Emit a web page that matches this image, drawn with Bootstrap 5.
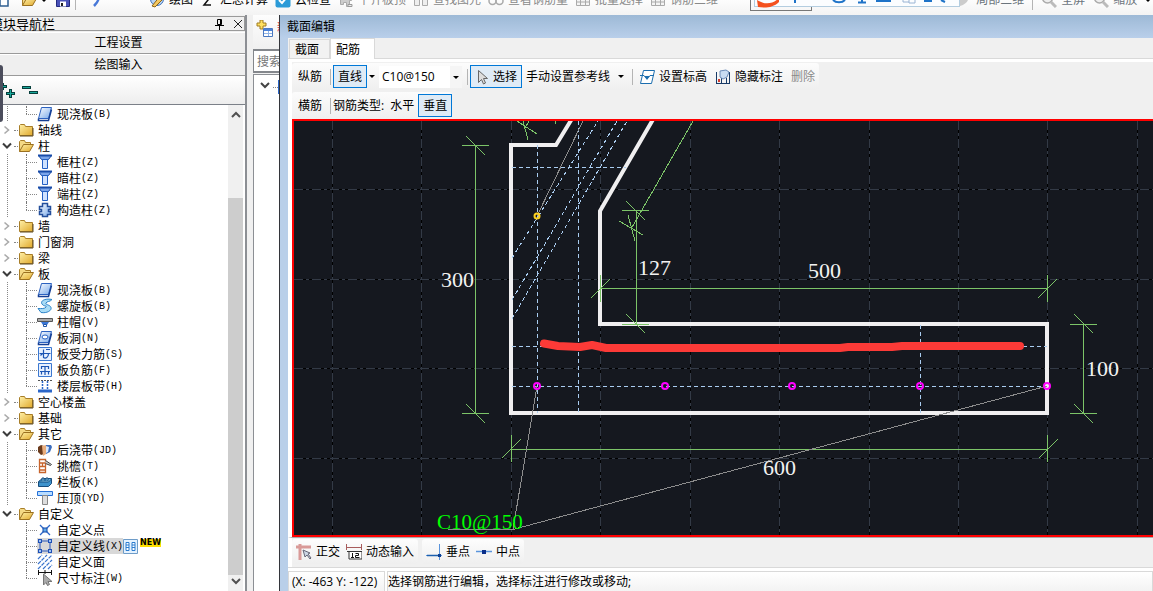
<!DOCTYPE html>
<html lang="zh-CN">
<head>
<meta charset="utf-8">
<meta name="viewport" content="width=device-width, initial-scale=1">
<title>截面编辑</title>
<link rel="stylesheet" href="https://cdn.jsdelivr.net/npm/bootstrap@5.3.0/dist/css/bootstrap.min.css">
<style>
:root{--ui:"Open Sans","Noto Sans CJK SC",sans-serif;--line:#8c8f94;--face:#f0f0f0}
body{font:12px/16px var(--ui);color:#000;background:var(--face)}
button,input,select{font:inherit;color:inherit;padding:0;border:0;background:none}
svg{flex:none;display:block}
.ic{width:16px;height:16px}
.topbar{height:15px;background:linear-gradient(#fdfdfd,#f3f3f3)}
.topbar button,.topbar .lead-icons,.topbar .view-tools{height:24px;display:flex;align-items:center;gap:4px;flex:none;white-space:nowrap}
.topbar .main-tools{margin-left:41px;gap:7px}
.topbar>*{flex:none;margin-bottom:3px}
.off{color:#8a8a8a}
.vsep{width:1px;height:16px;background:#b4b4b4;flex:none}
.ime-wrap{width:210px;height:12px;margin-left:32px;align-self:flex-start}
.ime-under{width:62px;height:11px;border:1px solid #777;border-top:0}
.ime{inset:0 0 auto 4px;height:7px;background:#fbfdff;border:1px solid #b3cde0;border-top:0}
/* navigation panel */
.navpanel{width:255px;margin-left:-8px;border-right:2px solid var(--line);flex:none}
.navpanel .cap{height:15px;margin-top:1px;border:1px solid #9a9a9a;border-left:0;font-size:13px}
.navpanel .cap span{margin-left:-2px}
.navpanel .bar{height:22px;border:0;border-top:1px solid #fff;border-bottom:1px solid #9a9a9a;background:#efefef;width:100%}
.navpanel .bar:first-of-type{margin-top:1px}
.navpanel .tools{height:28px;background:linear-gradient(#fff,#ededed);padding-left:8px}
.treebox{border-top:1px solid #7b8088;background:#fff;min-height:0;padding-left:8px}
.tree,.tree ul{list-style:none;margin:0;padding:0}
.tree{padding-top:1px;font-family:"Noto Sans CJK SC",sans-serif}
.row1,.kid{height:16px;display:flex;align-items:center;white-space:nowrap}
.row1 button{width:14px;height:16px;display:flex;align-items:center;justify-content:center;flex:none}
.row1 .stub{width:4px;border-top:1px dotted #888}
.row1 .ic{margin-right:4px}
.tree ul{background:repeating-linear-gradient(#888 0 1px,transparent 1px 2px) 7px 0/1px 100% no-repeat}
.tree .endgrp ul{background:none}
.kid{margin-left:26px;position:relative}
.kid::before{content:"";position:absolute;left:0;top:0;bottom:0;border-left:1px dotted #777}
.kid:last-child::before{bottom:8px}
.kid .stub{width:11px;border-top:1px dotted #888;flex:none}
.kid .ic{margin-right:4px}
.kid kbd{font:10px/14px "Liberation Mono",monospace;color:#000;background:none;padding:2px 0 0}
.pick{background:#d8d8d8;display:flex;align-items:center;height:16px}
.newtag{font:bold 8px/8px "DejaVu Sans",sans-serif;background:#ffe000;margin:0 0 7px 2px}
.sbar{width:15px;background:var(--face);margin-right:2px;flex:none;padding:4px 0}
.sbar .thumb{background:#cdcdcd;flex:0 1 378px;margin-top:77px}
.handle{left:0;top:65px;width:3px;height:57px;background:#4b4d5c;border-radius:0 3px 3px 0}
/* strip behind the editor */
.strip{width:32px;padding-left:6px;flex:none}
.strip .addrow{height:34px;background:linear-gradient(#fdfdfd,#f0f0f0);padding:5px 0 0 3px;gap:4px}
.strip input{width:60px;height:24px;border:1px solid #84878c;border-width:2px 1px;background:#fff;padding-left:3px}
.strip input::placeholder{color:#777;opacity:1}
.strip .peek{border-left:1px solid var(--line);border-top:1px solid var(--line);background:#fff;margin-top:1px}
/* editor window */
.editor{border-left:1px solid #33353a;min-width:0}
.frame{border-left:8px solid #b9cfe9;min-width:0;min-height:0}
.wtitle{height:23px;background:linear-gradient(#9db9d6,#b9cfea);padding-left:7px;font-size:12px;line-height:23px}
.tabs{height:21px;padding-left:1px;border-bottom:1px solid #d9d9d9}
.tabs button{height:19px;padding:0 5px;border:1px solid #d9d9d9;border-bottom:0;background:#f2f2f2;width:41px;line-height:17px;white-space:nowrap;text-align:left}
.tabs button.on{height:21px;background:#fff;width:45px;margin-bottom:-1px}
.work{border-top:3px solid #fff;border-left:4px solid #fff;padding-top:1px}
.tb{height:27px;background:linear-gradient(#fcfcfc,#efefef);border-radius:3px;padding-left:6px;white-space:nowrap}
.tb button{white-space:nowrap;display:flex;align-items:center}
.tb .tog{height:23px;border:1px solid #0078d7;background:#dfebf6;padding:0 4px}
.tb .vsep{margin:0 2px 0 8px}
.tb .vsep.tight{margin-left:5px}
.tb .picker{gap:2px}
.tb .flat{margin:0 4px 0 6px}
.tb+.tb,.second{margin-top:2px}
.caret{width:0;height:0;border:3px solid transparent;border-top-color:#000;border-bottom:0;flex:none}
.tb .drop{margin:0 4px 0 2px}
.tb select{width:83px;height:22px;appearance:none;padding-left:3px;font-size:12px;background:#fff url("data:image/svg+xml,%3Csvg xmlns='http://www.w3.org/2000/svg' width='12' height='22'%3E%3Cpath fill='%23f5f5f5' d='M0 0h12v22H0z'/%3E%3Cpath d='M3 10h6l-3 3z'/%3E%3C/svg%3E") right/12px 22px no-repeat}
.cad{border:2px solid #f00;border-right:0;background:#15181f;min-height:0;overflow:hidden}
.cad text{font-family:"Liberation Serif",serif;font-size:22px;fill:#f2f2f2}
.cad .tagtext{fill:#0f0;font-size:21px}
.g1{stroke:#000}.g2{stroke:#333a46;stroke-dasharray:9 3 3 3}
.dim{stroke:#7cc468}.axis{stroke:#a9ccf0;stroke-dasharray:4 3}.ldr{stroke:#8d8d8d}
.snap{height:30px;padding-top:1px;border-top:1px solid #aaa;border-left:4px solid #fff}
.snap>div{height:25px;background:linear-gradient(#fdfdfd,#efefef);padding:0 4px;gap:6px;border-radius:3px}
.snap button{display:flex;align-items:center;gap:4px;white-space:nowrap}
.status{height:24px;border-top:1px solid #d9d9d9;padding-top:3px;background:#fff;gap:2px;white-space:nowrap}
.status div{border:1px solid #d9d9d9;border-bottom:0;background:linear-gradient(#fff,#f3f3f3);line-height:20px;padding-left:0}
.status .xy{width:97px;padding-left:3px}
</style>
</head>
<body class="vh-100 overflow-hidden d-flex flex-column">

<svg width="0" height="0" class="position-absolute" aria-hidden="true">
<defs>
<linearGradient id="gy" x2="1" y2="1"><stop stop-color="#fff0a8"/><stop offset="1" stop-color="#e0a92c"/></linearGradient>
<linearGradient id="gb" x2="1" y2="1"><stop stop-color="#fff"/><stop offset="1" stop-color="#76a8ea"/></linearGradient>
<symbol id="fold" viewBox="0 0 16 16"><path d="M1.5 13.500V3.500l1-1h4l1 2h7v9z" fill="url(#gy)" stroke="#a87e28"/><path d="M2 14h13V6" fill="none" stroke="#5e4a20"/></symbol>
<symbol id="fopen" viewBox="0 0 16 16"><path d="M1.500 13.500v-10l1-1h4l1 2h5v2" fill="#f4d985" stroke="#a87e28"/><path d="M1.500 13.500l4-7h10l-4 7z" fill="url(#gy)" stroke="#9a7020"/></symbol>
<symbol id="slab" viewBox="0 0 16 16"><path d="M4.500 1.500h10l-3 11h-10z" fill="url(#gb)" stroke="#2c62c0"/><path d="M1.500 12.500v2h10l3-11" fill="none" stroke="#143f96" stroke-width="1.500"/></symbol>
<symbol id="col" viewBox="0 0 16 16"><path d="M1.500 1.500h13l-3 4h-7z" fill="#7ca6ea" stroke="#174ba8"/><path d="M1 1.500h14" stroke="#174ba8" stroke-width="2"/><path d="M5.500 5.500h5v9h-5z" fill="#cfe2ff" stroke="#2360c4"/></symbol>
<symbol id="gear" viewBox="0 0 16 16"><path d="M5.500 1.500h5v3h3v3h-2v2h2v3h-3v2h-5v-2h-3v-3h2v-2h-2v-3h3z" fill="url(#gb)" stroke="#244f9c" stroke-width="1.500"/></symbol>
<symbol id="spiral" viewBox="0 0 16 16"><path d="M15 1.500C8 0 3 3 5 6s5 1 4 3-5 1.500-8 1.500l3 4c6 1 11-2 10-5S8 7 9 5s4-1 6-3.500z" fill="#a8dcf6" stroke="#2d83c8"/></symbol>
<symbol id="cap" viewBox="0 0 16 16"><path d="M.5 4.500h15v3H.5z" fill="#aaa" stroke="#555"/><path d="M4 8h8l-2 3H6z" fill="#3b78d8"/><path d="M6.500 10.500h3v2h-3z" fill="#fff" stroke="#2356a8"/></symbol>
<symbol id="hole" viewBox="0 0 16 16"><use href="#slab"/><ellipse cx="8" cy="7" rx="3" ry="2" fill="#fff" stroke="#2360c4"/></symbol>
<symbol id="force" viewBox="0 0 16 16"><path d="M1.500 1.500h13v13h-13z" fill="#e8f1ff" stroke="#3c78d0"/><path d="M2.500 7.500h11M6.500 3.500v8c2 1.500 5 0 5-4M3.500 9.500l2-2M9 3.500h4" fill="none" stroke="#1c55b4" stroke-width="1.200"/></symbol>
<symbol id="neg" viewBox="0 0 16 16"><path d="M1.500 1.500h13v13h-13z" fill="#e8f1ff" stroke="#3c78d0"/><path d="M3 9.500h10M4.500 7V4.500h7V7M8 4v9M4.500 9.500v3M11.500 9.500v3" fill="none" stroke="#1c55b4" stroke-width="1.200"/></symbol>
<symbol id="band" viewBox="0 0 16 16"><path d="M1 2.500h14" stroke="#555" stroke-dasharray="2 1"/><path d="M1 13h14" stroke="#2b66c8" stroke-width="3"/><path d="M5.500 3v9M10.500 3v9" stroke="#2b66c8" stroke-dasharray="2 1" stroke-width="1.500"/></symbol>
<symbol id="post" viewBox="0 0 16 16"><path d="M1 5l3-2 3 1v8l-3 1-3-3z" fill="#6a3a1c"/><path d="M5 4l4-1v9l-3 2z" fill="#e9ad7c"/><path d="M9 3h5l1 2-2 5-4 2z" fill="#3c6dbd"/><path d="M9 4l3 1-1 5-2 1z" fill="#dbe8fa"/></symbol>
<symbol id="eave" viewBox="0 0 16 16"><path d="M2.500 1.500h6v13h-6zM2.500 5h6M2.500 8.500h6M2.500 12h6M5.500 5v4" fill="#fff" stroke="#c8642c" stroke-width="1.300"/><path d="M8.500 2.500l6 4-1 1-5-2" fill="#ccc" stroke="#444"/></symbol>
<symbol id="rail" viewBox="0 0 16 16"><path d="M1.500 7.500l4-3h9v5l-3 3h-10z" fill="#3f93cc" stroke="#174c7c"/><path d="M2 8h9.500l3-3M5 7V4h2v3M9 7V4h2v3" fill="#8fd0f0" stroke="#174c7c"/></symbol>
<symbol id="top" viewBox="0 0 16 16"><path d="M.5 1.500h15v4H.5z" fill="#b8dcff" stroke="#2470d8"/><path d="M5.500 5.500h5v9h-5z" fill="#ddd" stroke="#888"/></symbol>
<symbol id="cross" viewBox="0 0 16 16"><path d="M3 3l10 10M13 3L3 13" stroke="#2b66c8" stroke-width="1.300"/><path d="M6 6h4v4H6z" fill="#5fa8e8" stroke="#174ba8"/></symbol>
<symbol id="poly" viewBox="0 0 16 16"><path d="M3 3h10v10H3z" fill="none" stroke="#2b56b8"/><path d="M1 1h4v4H1zM11 1h4v4h-4zM1 11h4v4H1zM11 11h4v4h-4z" fill="#1e50b8"/><path d="M2 2h2v2H2zM12 2h2v2h-2zM2 12h2v2H2zM12 12h2v2h-2z" fill="#9fc4f4"/></symbol>
<symbol id="hatch" viewBox="0 0 16 16"><path d="M1 5l4-4M1 10l9-9M1 15L15 1M6 15l9-9M11 15l4-4" stroke="#3a74cc" stroke-width="1.200" stroke-dasharray="4 1"/></symbol>
<symbol id="arrow" viewBox="0 0 16 16"><path d="M3.500 1.500v12l3-3 2 4.500 2-1-2-4.500h4z" fill="#ddd" stroke="#666"/></symbol>
<symbol id="size" viewBox="0 0 16 16"><path d="M1 2.500h14M1.500 0v5M8 0v4M14.500 0v5" stroke="#111"/><path d="M6.500 4v11l2.500-2.500 1.500 3 2-1-1.500-3H15z" fill="#aaa" stroke="#777"/></symbol>
<symbol id="shut" viewBox="0 0 8 16"><path d="M1.500 4.500L5.500 8l-4 3.500" fill="none" stroke="#aaa" stroke-width="1.600"/></symbol>
<symbol id="open" viewBox="0 0 10 16"><path d="M1 5.500l4 4 4-4" fill="none" stroke="#3c3c3c" stroke-width="2"/></symbol>
<symbol id="gridic" viewBox="0 0 16 16"><path d="M1.500 2.500h13v11h-13zM1 6.500h14M1 10h14M5.500 2v12M10.500 2v12" fill="#f4f4f4" stroke="#aaa"/></symbol>
<symbol id="lens" viewBox="0 0 16 16"><circle cx="6.500" cy="6" r="5" fill="#eee" stroke="#aaa" stroke-width="1.500"/><path d="M10 10l5 5" stroke="#bbb" stroke-width="3"/></symbol>
</defs>
</svg>

<header class="topbar d-flex align-items-end overflow-hidden flex-shrink-0">
  <div class="lead-icons">
    <svg width="9" height="16"><path d="M0 1h8v13H0z" fill="#fff" stroke="#2f5f90" stroke-width="1.500"/></svg>
    <svg class="ic ms-2" viewBox="0 0 16 16"><use href="#fopen"/></svg>
    <span class="caret"></span>
    <svg class="ic ms-1" viewBox="0 0 16 16"><path d="M1.500 1.500h13v13h-13z" fill="#4a52b8" stroke="#232a80"/><path d="M4 1h8v6H4z" fill="#dfe6ff"/><path d="M5 9.500h6v5H5z" fill="#fff"/><path d="M6 11h2v3H6z" fill="#222"/></svg>
    <span class="vsep" style="height:20px"></span>
    <svg width="28" height="16"><path d="M16 0c4 4 4 8-2 14" fill="none" stroke="#4878d8" stroke-width="2.500"/></svg>
  </div>
  <div class="main-tools d-flex">
    <button><svg class="ic" viewBox="0 0 16 16"><circle cx="8" cy="7" r="6.500" fill="#b8d4f4" stroke="#3a6cb4"/><path d="M3 14l9-11 3 3-9 9z" fill="#f4c860" stroke="#8c6418"/></svg>绘图</button>
    <button><svg class="ic" viewBox="0 0 16 16"><path d="M11 3H4l4 5-4 5h7" fill="none" stroke="#111" stroke-width="1.500"/></svg>汇总计算</button>
    <button><svg class="ic" viewBox="0 0 16 16"><rect x=".5" y=".5" width="15" height="15" rx="2" fill="#2b9bd8"/><path d="M4 8l3 3 5-6" fill="none" stroke="#fff" stroke-width="2"/></svg>云检查</button>
    <button class="off"><svg class="ic" viewBox="0 0 16 16"><path d="M2.500 4.500h11v4h-2v6h-3v-4h-3v2h-3z" fill="#ccc" stroke="#aaa"/><path d="M10 12.500h4v2h-4z" fill="#eee" stroke="#999"/></svg>平齐板顶</button>
    <button class="off"><svg class="ic" viewBox="0 0 16 16"><path d="M1.500 4.500h5v9h-5zM9.500 4.500h5v9h-5z" fill="#eee" stroke="#aaa"/></svg>查找图元</button>
    <button class="off"><svg class="ic" viewBox="0 0 16 16"><circle cx="4.500" cy="9" r="3.500" fill="none" stroke="#aaa" stroke-width="1.500"/><circle cx="11.500" cy="9" r="3.500" fill="none" stroke="#aaa" stroke-width="1.500"/></svg>查看钢筋量</button>
    <button class="off"><svg class="ic"><use href="#gridic"/></svg>批量选择</button>
    <button class="off"><svg class="ic"><use href="#gridic"/></svg>钢筋三维</button>
  </div>
  <div class="ime-wrap position-relative">
    <div class="ime-under"></div>
    <div class="ime position-absolute">
      <svg width="204" height="8"><path d="M2 0c8 5 15 4 21-1l1-1v4C18 8 10 8 3 7z" fill="#f4511e"/><path d="M40 0v3M78 0c3 3 9 3 12 0" fill="none" stroke="#1e73c8" stroke-width="2"/><path d="M107 0v2M103 2.500h8M121 1h15M169 1h8M186 0l4 2" stroke="#1e73c8" stroke-width="2"/><path d="M148 0v2h6M154-1h6v4h-6z" fill="none" stroke="#9ab4d4"/></svg>
    </div>
  </div>
  <div class="view-tools text-secondary">
    <svg width="12" height="16"><path d="M0 14C8 12 10 6 8 0H0z" fill="#ccc"/></svg>
    <button>局部三维</button><span class="vsep ms-1" style="height:20px"></span>
    <button class="ms-1"><svg class="ic"><use href="#lens"/></svg>全屏</button>
    <button class="ms-1"><svg class="ic"><use href="#lens"/></svg>缩放</button><span class="caret ms-1"></span>
  </div>
</header>

<main class="d-flex flex-grow-1" style="min-height:0">
  <aside class="navpanel d-flex flex-column">
    <div class="cap d-flex align-items-center flex-shrink-0">
      <span class="flex-grow-1">模块导航栏</span>
      <svg width="34" height="14"><path d="M7.500 2.500h4v5h-4zM10.500 2v6M5 8.500h9M9.500 9v4" fill="none" stroke="#000"/><path d="M24 3l8 8M32 3l-8 8" stroke="#222"/></svg>
    </div>
    <button class="bar flex-shrink-0">工程设置</button>
    <button class="bar flex-shrink-0">绘图输入</button>
    <div class="tools d-flex align-items-center flex-shrink-0">
      <svg width="40" height="16"><g stroke="#073f3c" stroke-width="3"><path d="M0 4.500h7M2.500 1v7M6 11.500h9M10.500 7v9M22 5.500h9M29 10.500h9"/></g><path d="M0 4.500h6M2.500 2v5M7 11.500h7M10.500 8v7M23 5.500h7M30 10.500h7" stroke="#18a79a"/></svg>
    </div>
    <div class="treebox d-flex flex-grow-1 overflow-hidden">
      <ul class="tree flex-grow-1">
        <li><ul>
          <li class="kid"><i class="stub"></i><svg class="ic"><use href="#slab"/></svg>现浇板<kbd>(B)</kbd></li>
        </ul></li>
        <li class="row1"><button aria-label="展开"><svg width="8" height="16"><use href="#shut"/></svg></button><i class="stub"></i><svg class="ic"><use href="#fold"/></svg>轴线</li>
        <li><div class="row1"><button aria-label="折叠"><svg width="10" height="16"><use href="#open"/></svg></button><i class="stub"></i><svg class="ic"><use href="#fopen"/></svg>柱</div>
          <ul>
            <li class="kid"><i class="stub"></i><svg class="ic"><use href="#col"/></svg>框柱<kbd>(Z)</kbd></li>
            <li class="kid"><i class="stub"></i><svg class="ic"><use href="#col"/></svg>暗柱<kbd>(Z)</kbd></li>
            <li class="kid"><i class="stub"></i><svg class="ic"><use href="#col"/></svg>端柱<kbd>(Z)</kbd></li>
            <li class="kid"><i class="stub"></i><svg class="ic"><use href="#gear"/></svg>构造柱<kbd>(Z)</kbd></li>
          </ul></li>
        <li class="row1"><button aria-label="展开"><svg width="8" height="16"><use href="#shut"/></svg></button><i class="stub"></i><svg class="ic"><use href="#fold"/></svg>墙</li>
        <li class="row1"><button aria-label="展开"><svg width="8" height="16"><use href="#shut"/></svg></button><i class="stub"></i><svg class="ic"><use href="#fold"/></svg>门窗洞</li>
        <li class="row1"><button aria-label="展开"><svg width="8" height="16"><use href="#shut"/></svg></button><i class="stub"></i><svg class="ic"><use href="#fold"/></svg>梁</li>
        <li><div class="row1"><button aria-label="折叠"><svg width="10" height="16"><use href="#open"/></svg></button><i class="stub"></i><svg class="ic"><use href="#fopen"/></svg>板</div>
          <ul>
            <li class="kid"><i class="stub"></i><svg class="ic"><use href="#slab"/></svg>现浇板<kbd>(B)</kbd></li>
            <li class="kid"><i class="stub"></i><svg class="ic"><use href="#spiral"/></svg>螺旋板<kbd>(B)</kbd></li>
            <li class="kid"><i class="stub"></i><svg class="ic"><use href="#cap"/></svg>柱帽<kbd>(V)</kbd></li>
            <li class="kid"><i class="stub"></i><svg class="ic"><use href="#hole"/></svg>板洞<kbd>(N)</kbd></li>
            <li class="kid"><i class="stub"></i><svg class="ic"><use href="#force"/></svg>板受力筋<kbd>(S)</kbd></li>
            <li class="kid"><i class="stub"></i><svg class="ic"><use href="#neg"/></svg>板负筋<kbd>(F)</kbd></li>
            <li class="kid"><i class="stub"></i><svg class="ic"><use href="#band"/></svg>楼层板带<kbd>(H)</kbd></li>
          </ul></li>
        <li class="row1"><button aria-label="展开"><svg width="8" height="16"><use href="#shut"/></svg></button><i class="stub"></i><svg class="ic"><use href="#fold"/></svg>空心楼盖</li>
        <li class="row1"><button aria-label="展开"><svg width="8" height="16"><use href="#shut"/></svg></button><i class="stub"></i><svg class="ic"><use href="#fold"/></svg>基础</li>
        <li><div class="row1"><button aria-label="折叠"><svg width="10" height="16"><use href="#open"/></svg></button><i class="stub"></i><svg class="ic"><use href="#fopen"/></svg>其它</div>
          <ul>
            <li class="kid"><i class="stub"></i><svg class="ic"><use href="#post"/></svg>后浇带<kbd>(JD)</kbd></li>
            <li class="kid"><i class="stub"></i><svg class="ic"><use href="#eave"/></svg>挑檐<kbd>(T)</kbd></li>
            <li class="kid"><i class="stub"></i><svg class="ic"><use href="#rail"/></svg>栏板<kbd>(K)</kbd></li>
            <li class="kid"><i class="stub"></i><svg class="ic"><use href="#top"/></svg>压顶<kbd>(YD)</kbd></li>
          </ul></li>
        <li class="endgrp"><div class="row1"><button aria-label="折叠"><svg width="10" height="16"><use href="#open"/></svg></button><i class="stub"></i><svg class="ic"><use href="#fopen"/></svg>自定义</div>
          <ul>
            <li class="kid"><i class="stub"></i><svg class="ic"><use href="#cross"/></svg>自定义点</li>
            <li class="kid"><i class="stub"></i><span class="pick"><svg class="ic"><use href="#poly"/></svg>自定义线<kbd>(X)</kbd></span><svg width="15" height="15"><path d="M.5.500h14v14H.5z" fill="#e4f2ff" stroke="#6e9cc8"/><path d="M3 3.500h3v8H3zM9 3.500h3v8H9zM3 6h3M3 8.500h3M9 6h3M9 8.500h3" fill="#fff" stroke="#2b7cd0"/></svg><span class="newtag">NEW</span></li>
            <li class="kid"><i class="stub"></i><svg class="ic"><use href="#hatch"/></svg>自定义面</li>
            <li class="kid"><i class="stub"></i><svg class="ic"><use href="#size"/></svg>尺寸标注<kbd>(W)</kbd></li>
          </ul></li>
      </ul>
      <div class="sbar d-flex flex-column align-items-center">
        <svg width="10" height="12"><path d="M1 8l4-4 4 4" fill="none" stroke="#505050" stroke-width="2"/></svg>
        <div class="thumb w-100"></div>
        <svg width="10" height="12" class="mt-auto"><path d="M1 4l4 4 4-4" fill="none" stroke="#505050" stroke-width="2"/></svg>
      </div>
    </div>
  </aside>
  <div class="handle position-absolute"></div>

  <section class="strip d-flex flex-column overflow-hidden">
    <div class="addrow d-flex flex-shrink-0">
      <svg width="17" height="18"><path d="M4 0h3v3h3v3H7v3H4V6H1V3h3z" fill="#ffe060" stroke="#a07c20"/><path d="M7.500 8.500h9v8h-9z" fill="#fff" stroke="#4a78c0"/><path d="M8 9h8v2H8z" fill="#4a82d8"/><path d="M8 13.500h8M12.500 11v5" stroke="#8fb4e8"/></svg>
      <span class="text-danger text-nowrap">新</span>
    </div>
    <input type="text" placeholder="搜索" aria-label="搜索构件" class="flex-shrink-0">
    <div class="peek flex-grow-1"><svg width="26" height="22"><path d="M7 8l4 4 4-4" fill="none" stroke="#444" stroke-width="2"/><path d="M19 12.500h5" stroke="#888" stroke-dasharray="1 1"/><path d="M25 5v14" stroke="#2b66c8" stroke-width="2"/></svg></div>
  </section>

  <section class="editor d-flex flex-column flex-grow-1">
    <div class="wtitle flex-shrink-0">截面编辑</div>
    <div class="frame d-flex flex-column flex-grow-1">
      <div class="tabs d-flex align-items-end flex-shrink-0"><button>截面</button><button class="on">配筋</button></div>
      <div class="work d-flex flex-column align-items-start flex-shrink-0">
        <div class="tb d-flex align-items-center pe-1">
          <span>纵筋</span><i class="vsep"></i>
          <button class="tog">直线</button><span class="caret drop"></span>
          <select aria-label="钢筋规格"><option>C10@150</option></select>
          <i class="vsep tight"></i>
          <button class="tog picker"><svg class="ic"><use href="#arrow"/></svg>选择</button>
          <button class="ms-1">手动设置参考线<span class="caret ms-2"></span></button>
          <i class="vsep"></i>
          <button class="ms-1 gap-1"><svg class="ic" viewBox="0 0 16 16"><path d="M4.500 1.500h11l-3 13H1.500l3-13zM1 6.500h4l3 3 3-3h4" fill="#fff" stroke="#1b6dae"/><path d="M5 7h6l-3 4z" fill="#1b6dae"/></svg>设置标高</button>
          <button class="ms-2 gap-1"><svg class="ic" viewBox="0 0 16 16"><path d="M1.500 3v12M14.500 3v12M1 14.500h14M6.500 9v6M11.500 9v6" stroke="#183a66"/><path d="M5 2l6-1 3 2-2 5-4 2-3-2z" fill="#c9dcf2" stroke="#6c8cb8"/><path d="M3 10h2v3H3z" fill="#d43c2c"/></svg>隐藏标注</button>
          <button class="ms-2 off">删除</button>
        </div>
        <div class="tb d-flex align-items-center">
          <span>横筋</span><i class="vsep"></i><span>钢筋类型:</span>
          <button class="flat">水平</button><button class="tog">垂直</button>
        </div>
      </div>
      <div class="bg-white ps-1 d-flex flex-grow-1" style="min-height:0">
      <div class="cad flex-grow-1">
        <svg width="100%" height="100%" fill="none">
          <g transform="translate(-294 -121)">
            <g shape-rendering="crispEdges">
              <path class="g1" d="M332.500 121v3000M421.500 121v3000M511.500 121v3000M600.500 121v3000M690.500 121v3000M779.500 121v3000M869.500 121v3000M958.500 121v3000M1047.500 121v3000M1137.500 121v3000M294 189.500h3000M294 279.500h3000M294 368.500h3000M294 458.500h3000"/>
              <path class="g2" d="M332.500 121v3000M421.500 121v3000M511.500 121v3000M600.500 121v3000M690.500 121v3000M779.500 121v3000M869.500 121v3000M958.500 121v3000M1047.500 121v3000M1137.500 121v3000M294 189.500h3000M294 279.500h3000M294 368.500h3000M294 458.500h3000"/>
            </g>
            <path d="M573 117L556 145H511V413H1047V324H600V211L655 116" stroke="#f0eff0" stroke-width="4"/>
            <g class="axis" shape-rendering="crispEdges">
              <path d="M537.500 145V413M578.500 121V413M920.500 325V413M512 167.500H626M512 346.500H1047M512 386.500H1047"/>
              <path d="M512 258L598 121M512 300L617 121M512 319L627 121"/>
            </g>
            <g class="dim" shape-rendering="crispEdges">
              <path d="M475.500 145V413M462 145.500h27M462 413.500h27M466 136l19 19M466 404l19 19"/>
              <path d="M511 449.500H1047M511.500 435v27M1047.500 435v27M502 458l19-19M1039 458l19-19"/>
              <path d="M600 288.500H1047M600.500 275v27M1047.500 275v27M591 298l19-19M1038 298l19-19"/>
              <path d="M636.500 210V324M622 210.500h27M622 324.500h27M626 201l19 19M626 314l19 19"/>
              <path d="M1083.500 324V413M1070 324.500h27M1070 413.500h27M1074 314l19 19M1074 404l19 19"/>
              <path d="M693 121L631 229M619 221l24 14M628 215l7 26M517 121l20 13M523 121l5 19M529 121l-4 7M555.500 121v3"/>
            </g>
            <path class="ldr" shape-rendering="crispEdges" d="M583 121L537 216M537 386L513 529.500L1047 386M448 529.500h65"/>
            <path d="M544 343.500L558 346l22 1 12-2 14 3H840l8-1h44l10-1H1020" stroke="#fc3a37" stroke-width="8" stroke-linecap="round" stroke-linejoin="round"/>
            <g stroke="#f0f" stroke-width="2"><circle cx="537" cy="386" r="3"/><circle cx="665" cy="386" r="3"/><circle cx="792" cy="386" r="3"/><circle cx="920" cy="386" r="3"/><circle cx="1047" cy="386" r="3"/></g>
            <circle cx="537" cy="216" r="2.500" stroke="#ffd21f" stroke-width="2"/>
            <text x="441" y="287">300</text><text x="638" y="275">127</text><text x="808" y="278">500</text><text x="763" y="475">600</text><text x="1086" y="376">100</text>
            <text x="437" y="529" class="tagtext">C10@150</text>
          </g>
        </svg>
      </div>
      </div>
      <div class="snap d-flex flex-shrink-0">
        <div class="d-flex">
          <button><svg class="ic" viewBox="0 0 16 16"><path d="M0 3h15M4 0v16" stroke="#d99a98" stroke-width="3"/><path d="M7 6l2 7 2-2 3 4 1-1-3-4 2-1z" fill="#ccd6e4" stroke="#667"/></svg>正交</button>
          <button><svg class="ic" viewBox="0 0 16 16"><path d="M.5 0v6M15.500 0v6M1 3.500h14" stroke="#a85c5c"/><path d="M1 7.500h15v7.500H3V8" fill="#fff" stroke="#333"/><path d="M6.500 9v5M5 13.500h3M9.500 9.500h3v2h-3v2h4" fill="none" stroke="#111"/></svg>动态输入</button>
        </div>
        <div class="d-flex ms-1">
          <button><svg class="ic" viewBox="0 0 16 16"><path d="M13.500 0v16M0 11.500h16" stroke="#5a94dc"/><path d="M1 11.500h12" stroke="#1b5fae" stroke-width="1.500"/><path d="M12 10h3v3h-3z" fill="#0d3f90"/></svg>垂点</button>
          <button><svg class="ic" viewBox="0 0 16 16"><path d="M0 7.500h16" stroke="#5a94dc" stroke-width="1.500"/><path d="M6 6h4v4H6z" fill="#0b2f8a"/></svg>中点</button>
        </div>
      </div>
      <div class="status d-flex flex-shrink-0"><div class="xy">(X: -463 Y: -122)</div><div class="flex-grow-1">选择钢筋进行编辑，选择标注进行修改或移动;</div></div>
    </div>
  </section>
</main>
<script src="https://cdn.jsdelivr.net/npm/bootstrap@5.3.0/dist/js/bootstrap.bundle.min.js"></script>
</body>
</html>
